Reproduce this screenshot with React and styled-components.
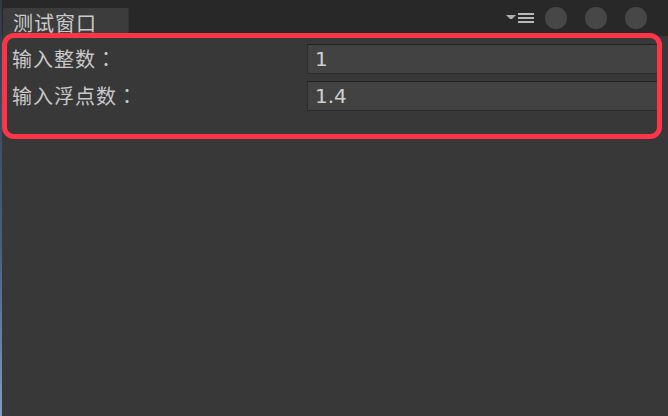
import styled, { createGlobalStyle } from "styled-components";

const GlobalStyle = createGlobalStyle`
  html, body {
    margin: 0;
    padding: 0;
    background: #383838;
  }
`;

const Window = styled.div`
  position: relative;
  display: flex;
  width: 668px;
  height: 416px;
  overflow: hidden;
  font-family: "Noto Sans CJK SC", "Noto Sans", sans-serif;
`;

const EdgeStrip = styled.div`
  width: 2px;
  flex: none;
  background: linear-gradient(#323a48, #4a5f80 60%, #7f9cc4);
`;

const Main = styled.div`
  flex: 1;
  display: flex;
  flex-direction: column;
  background: #383838;
`;

const TitleBar = styled.div`
  height: 36px;
  display: flex;
  align-items: flex-end;
  background: #282828;
  padding-left: 1px;
  padding-right: 21px;
`;

const Tab = styled.div`
  width: 126px;
  height: 28px;
  box-sizing: border-box;
  background: #3c3c3c;
  border-right: 1px solid #333;
  border-radius: 2px 2px 0 0;
  color: #cacaca;
  font-size: 20px;
  letter-spacing: 1px;
  line-height: 29px;
  padding-left: 10px;
`;

const Controls = styled.div`
  margin-left: auto;
  align-self: center;
  display: flex;
  align-items: center;
  gap: 11px;
`;

const DotGroup = styled.div`
  display: flex;
  gap: 18px;
`;

const MenuIcon = styled.svg`
  display: block;
`;

const Dot = styled.div`
  width: 22px;
  height: 22px;
  border-radius: 50%;
  background: #474747;
`;

const Content = styled.div`
  display: flex;
  flex-direction: column;
  gap: 7px;
  padding: 8px 8px 0 10px;
`;

const Row = styled.div`
  display: grid;
  grid-template-columns: 295px 1fr;
  align-items: center;
  height: 30px;
`;

const Label = styled.div`
  color: #c8c8c8;
  font-size: 20px;
  letter-spacing: 1px;
  line-height: 30px;
`;

const Colon = styled.span`
  font-family: "Noto Sans CJK TC", sans-serif;
`;

const Field = styled.div`
  height: 30px;
  box-sizing: border-box;
  background: #424242;
  border: 1px solid #2b2b2b;
  border-top-color: #212121;
  color: #cfcfcf;
  font-family: "DejaVu Sans", sans-serif;
  font-size: 20px;
  line-height: 28px;
  padding-left: 7px;
`;

const Highlight = styled.div`
  position: absolute;
  left: 2px;
  top: 33px;
  width: 660px;
  height: 106px;
  box-sizing: border-box;
  border: 5px solid #fd3546;
  border-radius: 12px;
  pointer-events: none;
`;

const fields = [
  { label: "输入整数", value: "1" },
  { label: "输入浮点数", value: "1.4" },
];

export default function App() {
  return (
    <>
      <GlobalStyle />
      <Window>
        <EdgeStrip />
        <Main>
          <TitleBar>
            <Tab>测试窗口</Tab>
            <Controls>
              <MenuIcon width="28" height="10" viewBox="0 0 28 10">
                <path d="M0 2h10l-4 4h-2z" fill="#b0b0b0" />
                <rect x="12" y="0" width="16" height="2" fill="#b8b8b8" />
                <rect x="12" y="4" width="16" height="2" fill="#b8b8b8" />
                <rect x="12" y="8" width="16" height="2" fill="#b8b8b8" />
              </MenuIcon>
              <DotGroup>
                <Dot />
                <Dot />
                <Dot />
              </DotGroup>
            </Controls>
          </TitleBar>
          <Content>
            {fields.map((f) => (
              <Row key={f.label}>
                <Label>
                  {f.label}
                  <Colon>：</Colon>
                </Label>
                <Field>{f.value}</Field>
              </Row>
            ))}
          </Content>
        </Main>
        <Highlight />
      </Window>
    </>
  );
}
